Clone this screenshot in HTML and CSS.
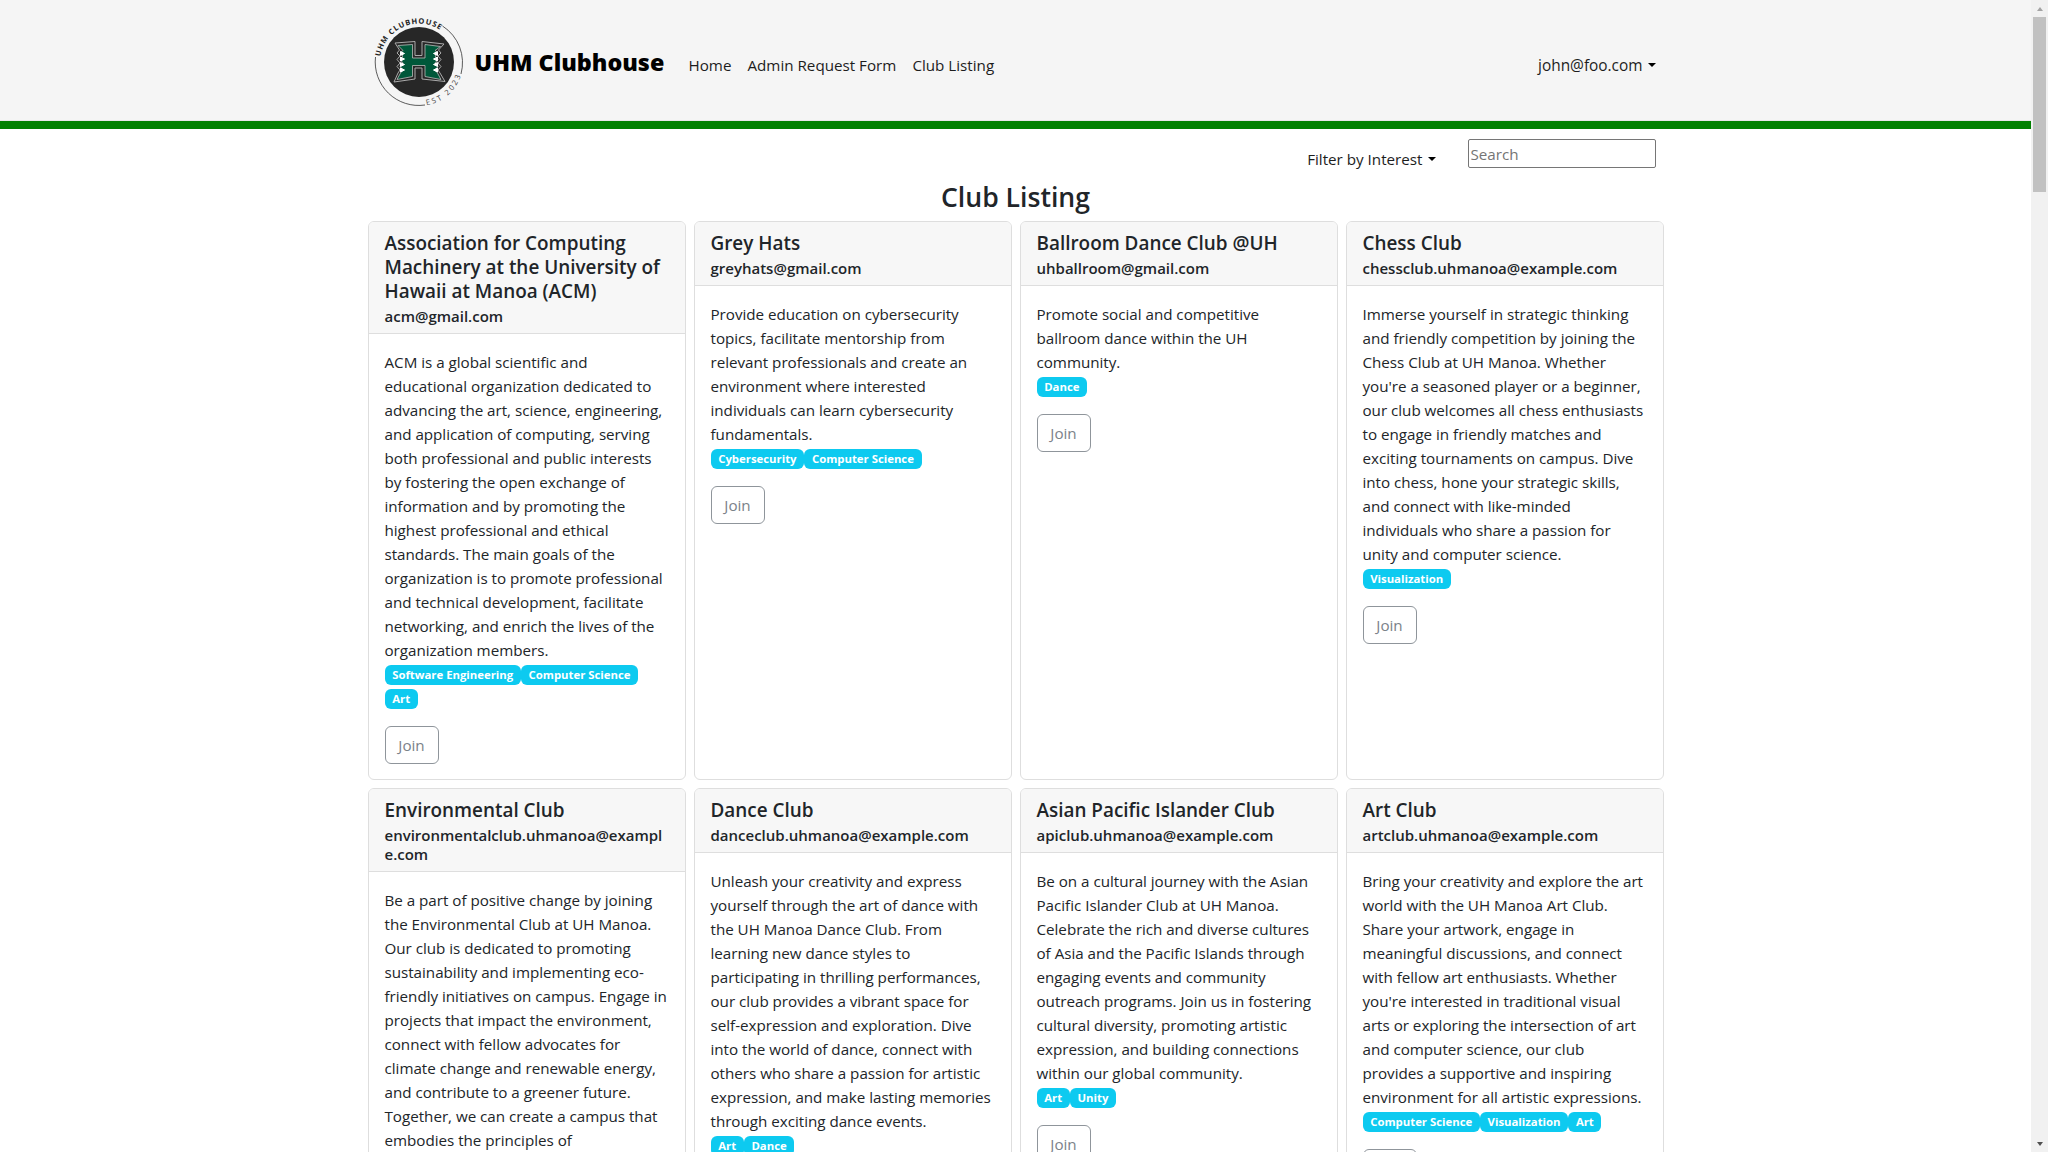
FILE: index.html
```html
<!DOCTYPE html>
<html lang="en">
<head>
<meta charset="utf-8">
<title>UHM Clubhouse</title>
<link rel="stylesheet" href="styles.css">
</head>
<body>
<div class="page">
  <nav class="navbar">
    <div class="container navbar-inner">
      <a class="brand">
        <svg class="logo" viewBox="0 0 100 100" width="100" height="100">
          <defs>
            <path id="arc-top" d="M11.500 44.500A38.900 38.900 0 0 1 86 36"/>
            <path id="arc-bottom" d="M57.600 93.300A44 44 0 0 0 93.500 57"/>
          </defs>
          <g fill="none" stroke="#333" stroke-width=".8">
            <path d="M73.500 14A43.500 43.500 0 0 1 92 62"/>
            <path d="M6.500 45A43.500 43.500 0 0 0 56 93"/>
          </g>
          <circle cx="50" cy="50" r="35" fill="#272727"/>
          <path d="M26 31L46 29.500V43.500H53V29.500L75 32L69.500 38L72 41L69 44L72 47.500L69 51L72 54.500L69 58L71 61L76 69.500L53 67V56H46V67L25 70L29 61L31 58L28 54.500L31 51L28 47.500L31 44L28 41L30.500 38Z" fill="#272727" stroke="#aaa" stroke-width="1"/>
          <path d="M29 33.500L43.500 32.500V46H56V32.500L71.500 34.500L66 38.500L69 41L66 44L69 47.500L66 51L69 54.500L66 58L68.500 61L72 67.500L56 64.500V53.500H43.500V64.500L28 67.500L31.500 61L34 58L31 54.500L34 51L31 47.500L34 44L31 41L34 38.500Z" fill="#00583a" stroke="#bbb" stroke-width=".8"/>
          <path d="M31.500 39.500l4 2-4 2zM31.500 45l4 2-4 2zM31.500 50.500l4 2-4 2zM31.500 56l4 2-4 2zM68.500 39.500l-4 2 4 2zM68.500 45l-4 2 4 2zM68.500 50.500l-4 2 4 2zM68.500 56l-4 2 4 2z" fill="#fff" stroke="#fff"/>
          <text class="logo-top"><textPath href="#arc-top" textLength="77">UHM CLUBHOUSE</textPath></text>
          <text class="logo-bottom"><textPath href="#arc-bottom" textLength="47">EST 2023</textPath></text>
        </svg>
        <span class="brand-name">UHM Clubhouse</span>
      </a>
      <div class="nav-links">
        <a>Home</a><a>Admin Request Form</a><a>Club Listing</a>
      </div>
      <a class="user dropdown">john@foo.com</a>
    </div>
  </nav>
  <main class="container">
    <div class="tools">
      <a class="filter dropdown">Filter by Interest</a>
      <input class="search" type="text" placeholder="Search">
    </div>
    <h3 class="heading">Club Listing</h3>
    <div class="grid">
      <article class="card">
        <header><h5>Association for Computing<br>Machinery at the University of<br>Hawaii at Manoa (ACM)</h5><h6>acm@gmail.com</h6></header>
        <div class="body">
          <p>ACM is a global scientific and<br>educational organization dedicated to<br>advancing the art, science, engineering,<br>and application of computing, serving<br>both professional and public interests<br>by fostering the open exchange of<br>information and by promoting the<br>highest professional and ethical<br>standards. The main goals of the<br>organization is to promote professional<br>and technical development, facilitate<br>networking, and enrich the lives of the<br>organization members.</p>
          <div class="tags"><span>Software Engineering</span><span>Computer Science</span><span>Art</span></div>
          <button>Join</button>
        </div>
      </article>
      <article class="card">
        <header><h5>Grey Hats</h5><h6>greyhats@gmail.com</h6></header>
        <div class="body">
          <p>Provide education on cybersecurity<br>topics, facilitate mentorship from<br>relevant professionals and create an<br>environment where interested<br>individuals can learn cybersecurity<br>fundamentals.</p>
          <div class="tags"><span>Cybersecurity</span><span>Computer Science</span></div>
          <button>Join</button>
        </div>
      </article>
      <article class="card">
        <header><h5>Ballroom Dance Club @UH</h5><h6>uhballroom@gmail.com</h6></header>
        <div class="body">
          <p>Promote social and competitive<br>ballroom dance within the UH<br>community.</p>
          <div class="tags"><span>Dance</span></div>
          <button>Join</button>
        </div>
      </article>
      <article class="card">
        <header><h5>Chess Club</h5><h6>chessclub.uhmanoa@example.com</h6></header>
        <div class="body">
          <p>Immerse yourself in strategic thinking<br>and friendly competition by joining the<br>Chess Club at UH Manoa. Whether<br>you're a seasoned player or a beginner,<br>our club welcomes all chess enthusiasts<br>to engage in friendly matches and<br>exciting tournaments on campus. Dive<br>into chess, hone your strategic skills,<br>and connect with like-minded<br>individuals who share a passion for<br>unity and computer science.</p>
          <div class="tags"><span>Visualization</span></div>
          <button>Join</button>
        </div>
      </article>
      <article class="card">
        <header><h5>Environmental Club</h5><h6>environmentalclub.uhmanoa@exampl<br>e.com</h6></header>
        <div class="body">
          <p>Be a part of positive change by joining<br>the Environmental Club at UH Manoa.<br>Our club is dedicated to promoting<br>sustainability and implementing eco-<br>friendly initiatives on campus. Engage in<br>projects that impact the environment,<br>connect with fellow advocates for<br>climate change and renewable energy,<br>and contribute to a greener future.<br>Together, we can create a campus that<br>embodies the principles of</p>
        </div>
      </article>
      <article class="card">
        <header><h5>Dance Club</h5><h6>danceclub.uhmanoa@example.com</h6></header>
        <div class="body">
          <p>Unleash your creativity and express<br>yourself through the art of dance with<br>the UH Manoa Dance Club. From<br>learning new dance styles to<br>participating in thrilling performances,<br>our club provides a vibrant space for<br>self-expression and exploration. Dive<br>into the world of dance, connect with<br>others who share a passion for artistic<br>expression, and make lasting memories<br>through exciting dance events.</p>
          <div class="tags"><span>Art</span><span>Dance</span></div>
          <button>Join</button>
        </div>
      </article>
      <article class="card">
        <header><h5>Asian Pacific Islander Club</h5><h6>apiclub.uhmanoa@example.com</h6></header>
        <div class="body">
          <p>Be on a cultural journey with the Asian<br>Pacific Islander Club at UH Manoa.<br>Celebrate the rich and diverse cultures<br>of Asia and the Pacific Islands through<br>engaging events and community<br>outreach programs. Join us in fostering<br>cultural diversity, promoting artistic<br>expression, and building connections<br>within our global community.</p>
          <div class="tags"><span>Art</span><span>Unity</span></div>
          <button>Join</button>
        </div>
      </article>
      <article class="card">
        <header><h5>Art Club</h5><h6>artclub.uhmanoa@example.com</h6></header>
        <div class="body">
          <p>Bring your creativity and explore the art<br>world with the UH Manoa Art Club.<br>Share your artwork, engage in<br>meaningful discussions, and connect<br>with fellow art enthusiasts. Whether<br>you're interested in traditional visual<br>arts or exploring the intersection of art<br>and computer science, our club<br>provides a supportive and inspiring<br>environment for all artistic expressions.</p>
          <div class="tags"><span>Computer Science</span><span>Visualization</span><span>Art</span></div>
          <button>Join</button>
        </div>
      </article>
    </div>
  </main>
</div>
<div class="scrollbar"><i class="up"></i><i class="thumb"></i><i class="down"></i></div>
</body>
</html>
```
FILE: styles.css
```css
* { box-sizing: border-box; }
body {
  margin: 0;
  height: 1152px;
  display: flex;
  overflow: hidden;
  background: #fff;
  color: #212529;
  font: 15.2px/24px "Open Sans", "Noto Sans", sans-serif;
}
.page { flex: 1; min-width: 0; height: 1152px; overflow: hidden; }
.container { width: 1320px; margin: 0 auto; padding: 0 12px; }
.navbar {
  height: 129px;
  background: #f5f5f5;
  border-bottom: 8px solid green;
  box-shadow: inset 0 -1px #e6e6e6;
}
.navbar-inner { display: flex; align-items: center; height: 121px; padding-right: 20px; }
.brand { display: flex; align-items: center; width: 321px; height: 100px; margin-top: 3px; color: #000; }
.logo { flex: none; margin-left: 1px; }
.brand-name { margin: -1px 0 0 6px; font-size: 23.3px; font-weight: 800; white-space: nowrap; }
.logo-top { font: 700 7.500px "Open Sans", sans-serif; fill: #222; }
.logo-bottom { font: 400 7.500px "Open Sans", sans-serif; fill: #444; }
.nav-links { display: flex; gap: 16px; margin-top: 9px; color: #1d1d1d; white-space: nowrap; }
.user { margin: 10px 0 0 auto; color: #1d1d1d; }
.dropdown { white-space: nowrap; }
.dropdown::after {
  content: "";
  display: inline-block;
  margin-left: 5px;
  vertical-align: 4px;
  border: 4.800px solid transparent;
  border-top-color: #000;
  border-bottom: 0;
}
.user.dropdown { font-size: 15.4px; }
.tools { display: flex; justify-content: flex-end; height: 51px; padding: 10px 8px 0 0; }
.filter { margin: 8px 32px 0 0; color: #1d1d1d; }
.search {
  width: 188px;
  height: 29px;
  padding: 1px 2px;
  border: 1px solid #767676;
  border-radius: 2px;
  font: inherit;
}
.search::placeholder { color: #757575; }
.heading { margin: 0 0 7px; text-align: center; font-size: 26.6px; line-height: 34px; font-weight: 600; }
.grid { display: grid; grid-template-columns: repeat(4, 318px); gap: 8px; }
.card {
  border: 1px solid #dedede;
  border-radius: 6px;
  overflow: hidden;
  white-space: nowrap;
}
.card header { padding: 9px 16px 7px; background: #f7f7f7; border-bottom: 1px solid #dedede; }
h5, h6 { margin: 0; font-weight: 600; }
h5 { margin-bottom: 3.600px; font-size: 18.9px; line-height: 24px; }
h6 { font-size: 15px; line-height: 19.2px; }
.body { padding: 16px 16px 15.400px; }
.body p { margin: 0; letter-spacing: -.02px; }
.tags { display: flex; flex-wrap: wrap; margin-bottom: 16px; }
.tags span {
  height: 20px;
  margin: 3.400px 0 .6px;
  padding: 0 7.700px;
  border-radius: 6px;
  background: #0dcaf0;
  color: #fff;
  font-size: 11.35px;
  line-height: 20px;
  font-weight: 700;
}
.body button {
  display: block;
  width: 54px;
  height: 38px;
  padding: 0;
  border: 1px solid #8f959b;
  border-radius: 6px;
  background: #fff;
  color: #7b8289;
  font: inherit;
}
.scrollbar {
  display: flex;
  flex-direction: column;
  align-items: center;
  width: 17px;
  height: 1152px;
  background: #f1f1f1;
}
.up { margin: 7px 0 6px; border: 3.500px solid transparent; border-top: 0; border-bottom: 4px solid #a3a3a3; }
.thumb { width: 13px; height: 175px; background: #c1c1c1; }
.down { margin: auto 0 6px; border: 3.500px solid transparent; border-bottom: 0; border-top: 4px solid #505050; }
```
